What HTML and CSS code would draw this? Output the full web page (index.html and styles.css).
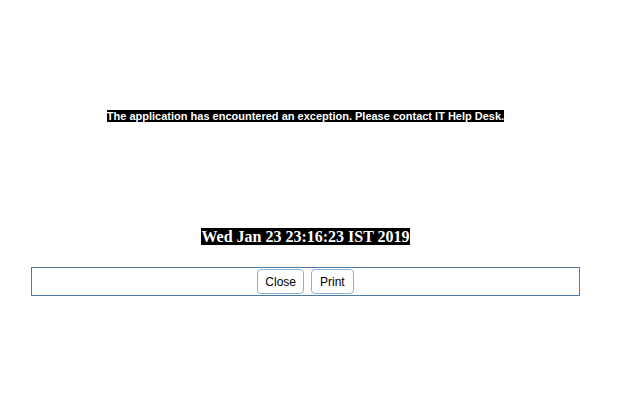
FILE: index.html
```html
<!DOCTYPE html>
<html>
<head>
<meta charset="utf-8">
<link rel="stylesheet" href="styles.css">
</head>
<body>
<div class="page">
  <p class="msg"><span class="msg-text">The application has encountered an exception. Please contact IT Help Desk.</span></p>
  <p class="date"><span class="date-text">Wed Jan 23 23:16:23 IST 2019</span></p>
  <div class="actions">
    <button class="btn">Close</button>
    <button class="btn btn-print">Print</button>
  </div>
</div>
</body>
</html>
```
FILE: styles.css
```css
html, body {
  margin: 0;
  padding: 0;
  background: #fff;
}
.page {
  width: 549px;
  margin-left: 31px;
  padding-top: 110px;
  text-align: center;
}
.msg {
  margin: 0;
  font-family: "Liberation Sans", Arial, sans-serif;
  font-size: 11px;
  line-height: 13px;
  font-weight: bold;
}
.msg-text {
  background: #000;
  color: #fff;
}
.date {
  margin: 105px 0 0;
  font-family: "Liberation Serif", "Times New Roman", serif;
  font-size: 16px;
  line-height: 18px;
  font-weight: bold;
}
.date-text {
  background: #000;
  color: #fff;
}
.actions {
  margin-top: 21px;
  height: 26px;
  padding-top: 1px;
  box-sizing: content-box;
  border: 1px solid #4d7aa6;
  display: flex;
  justify-content: center;
  align-items: flex-start;
  gap: 7px;
}
.btn {
  height: 25px;
  padding: 0 7px;
  background: #fff;
  border: 1px solid #8cb2da;
  border-radius: 4px;
  font-family: "Liberation Sans", Arial, sans-serif;
  font-size: 12px;
  color: #000;
}
.btn-print {
  padding: 0 8px;
}
```
